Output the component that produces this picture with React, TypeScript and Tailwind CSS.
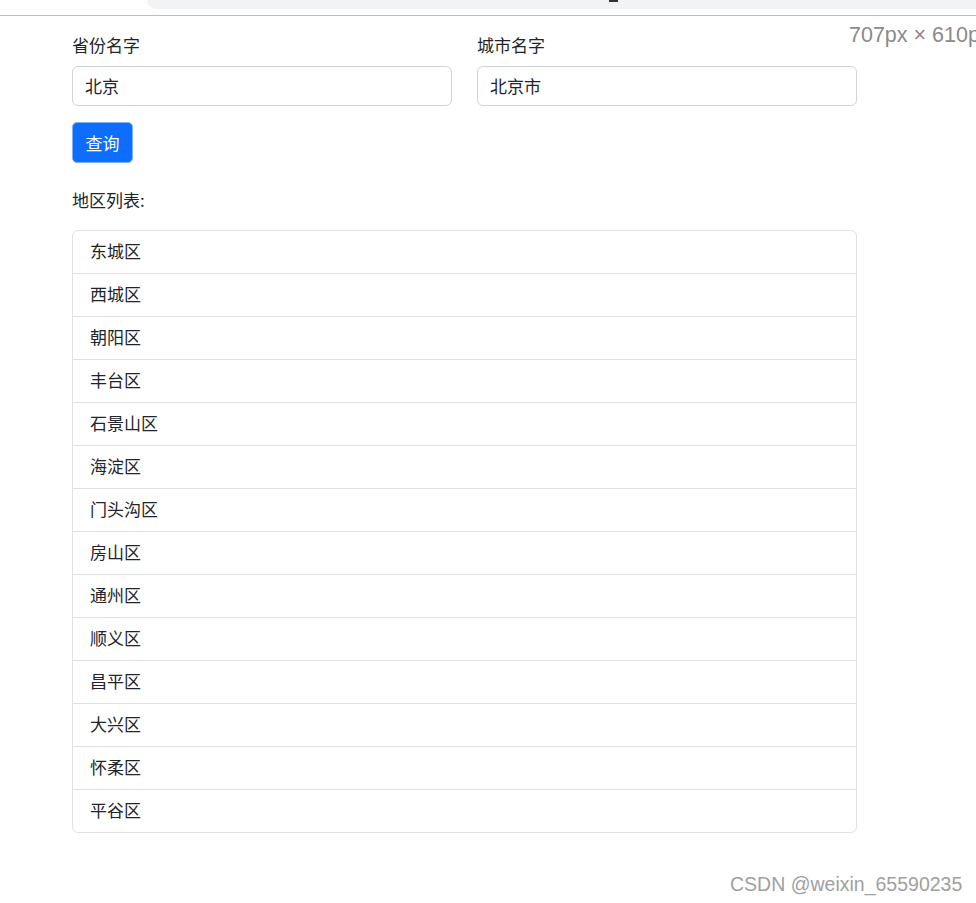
import React from "react";

const districts = [
  "东城区",
  "西城区",
  "朝阳区",
  "丰台区",
  "石景山区",
  "海淀区",
  "门头沟区",
  "房山区",
  "通州区",
  "顺义区",
  "昌平区",
  "大兴区",
  "怀柔区",
  "平谷区",
];

export default function App() {
  return (
    <div
      className="relative w-[976px] h-[903px] bg-white overflow-hidden text-[#212529]"
      style={{ fontFamily: '"Microsoft YaHei", "Noto Sans CJK SC", "Noto Sans", sans-serif' }}
    >
      {/* browser chrome remnant */}
      <div className="relative h-[16px] border-b border-[#bdbdbd]">
        <div className="ml-[147px] h-[9px] bg-[#f1f3f4] rounded-bl-[12px]" />
        <div className="absolute left-[609px] top-0 w-[9px] h-[2px] bg-[#333]" />
      </div>

      <div className="absolute left-[849px] top-[23px] text-[21.5px] leading-[24px] text-[#8a8a8a] whitespace-nowrap font-['Liberation_Sans',sans-serif]">
        707px × 610px
      </div>

      <div className="ml-[72px] w-[785px] pt-[17px]">
        <div className="flex gap-[25px]">
          <div className="flex-1">
            <div className="text-[17px] leading-[24px] mb-[9px]">省份名字</div>
            <div className="h-[40px] border border-[#ced4da] rounded-[6px] flex items-center px-[12px] text-[17px]">
              北京
            </div>
          </div>
          <div className="flex-1">
            <div className="text-[17px] leading-[24px] mb-[9px]">城市名字</div>
            <div className="h-[40px] border border-[#ced4da] rounded-[6px] flex items-center px-[12px] text-[17px]">
              北京市
            </div>
          </div>
        </div>

        <button className="mt-[16px] w-[61px] h-[41px] bg-[#0d6efd] text-white text-[17px] rounded-[5px] border border-[#7fb0fb] flex items-center justify-center">
          查询
        </button>

        <div className="mt-[25px] text-[17px] leading-[24px]">地区列表:</div>

        <div className="mt-[18px] border border-[#dee2e6] rounded-[6px]">
          {districts.map((d, i) => (
            <div
              key={d}
              className={
                i === 0
                  ? "h-[42px] flex items-center px-[17px] pb-[2px] text-[17px]"
                  : "h-[43px] border-t border-[#dee2e6] flex items-center px-[17px] pb-[2px] text-[17px]"
              }
            >
              {d}
            </div>
          ))}
        </div>
      </div>

      <div className="absolute left-[730px] top-[872px] text-[19.5px] leading-[24px] text-[#a0a0a0] whitespace-nowrap font-['Liberation_Sans',sans-serif]">
        CSDN @weixin_65590235
      </div>
    </div>
  );
}
